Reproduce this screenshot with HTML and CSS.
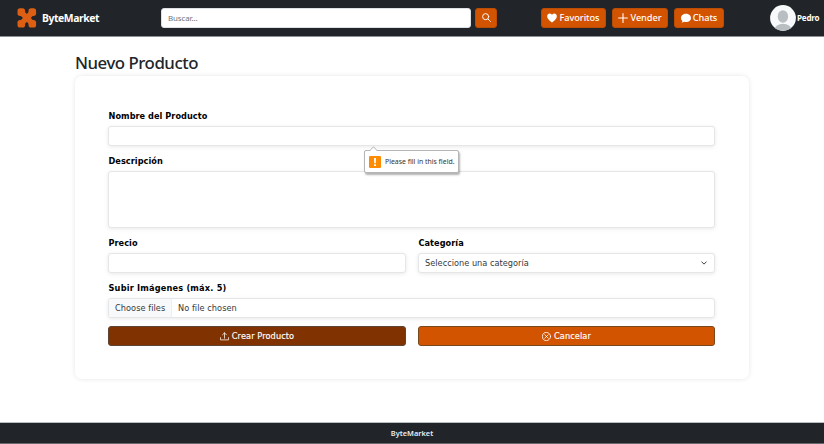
FILE: index.html
```
<!DOCTYPE html>
<html lang="es">
<head>
<meta charset="utf-8">
<title>ByteMarket</title>
<link rel="stylesheet" href="styles.css">
</head>
<body>
<header class="navbar">
  <a class="brand">
    <svg class="logo" viewBox="0 0 20 20" fill="#dd5f13"><rect x="0.500" y="0.300" width="7.600" height="7.600" rx="2.600"/><rect x="11.500" y="0.300" width="7.600" height="7.600" rx="2.600"/><rect x="0.500" y="12" width="7.600" height="7.600" rx="2.600"/><rect x="11.500" y="12" width="7.600" height="7.600" rx="2.600"/><path d="M4.500 4.500L15.200 15.400M15.200 4.500L4.500 15.400" stroke="#dd5f13" stroke-width="5.600"/></svg>
    <span class="brand-name">ByteMarket</span>
  </a>
  <form class="search">
    <div class="search-input"><span>Buscar...</span></div>
    <div class="btn search-btn"><svg viewBox="0 0 16 16" width="9" height="9" fill="none" stroke="#fff" stroke-width="1.700" stroke-linecap="round"><circle cx="6.500" cy="6.500" r="5.400"/><path d="M10.600 10.600L15 15"/></svg></div>
  </form>
  <nav class="links">
    <a class="btn fav"><svg viewBox="0 0 16 16" width="10" height="10" fill="#fff"><path d="M8 15.200C5 13 .3 9.500.3 5.200C.3.500 5.500-.5 8 2.600C10.500-.5 15.700.5 15.700 5.200C15.700 9.500 11 13 8 15.200Z"/></svg><span>Favoritos</span></a>
    <a class="btn sell"><svg viewBox="0 0 16 16" width="10" height="10" stroke="#fff" stroke-width="1.700" stroke-linecap="round"><path d="M8 1V15M1 8H15"/></svg><span>Vender</span></a>
    <a class="btn chat"><svg viewBox="0 0 16 16" width="10" height="10" fill="#fff"><path d="M8 1c4.400 0 8 3 8 6.800s-3.600 6.700-8 6.700c-1 0-2-.2-2.800-.4C4 14.800 2.500 15.300.7 15.500c1-1 1.500-2 1.500-2.900C.8 11.300 0 9.700 0 7.800 0 4 3.600 1 8 1z"/></svg><span>Chats</span></a>
  </nav>
  <div class="user">
    <svg class="avatar" viewBox="0 0 26 26"><defs><clipPath id="face"><circle cx="13" cy="13" r="12.800"/></clipPath></defs><circle cx="13" cy="13" r="12.900" fill="#f8f9fa"/><g clip-path="url(#face)" fill="#b9bec3"><ellipse cx="12.900" cy="11.500" rx="5.200" ry="6.200"/><ellipse cx="13" cy="25" rx="8.500" ry="6.300"/></g></svg>
    <span>Pedro</span>
  </div>
</header>
<main>
  <h1><span>Nuevo Producto</span></h1>
  <section class="card">
    <div class="field name">
      <label>Nombre del Producto</label>
      <div class="control"></div>
      <div class="tip">
        <svg class="arrow" viewBox="0 0 9 5"><path d="M0.500 5L4.500 0.800L8.500 5" fill="#fff" stroke="#aaa" stroke-width="0.900"/></svg>
        <svg class="warn" viewBox="0 0 12 12"><rect width="12" height="12" rx="1" fill="#ff8c00"/><path d="M5 2H7L6.800 7.200H5.200ZM5.100 8.200H6.900V10H5.100Z" fill="#fff"/></svg>
        <span>Please fill in this field.</span>
      </div>
    </div>
    <div class="field">
      <label>Descripción</label>
      <div class="control area"></div>
    </div>
    <div class="cols">
      <div class="field"><label>Precio</label><div class="control"></div></div>
      <div class="field"><label>Categoría</label><div class="control select"><span>Seleccione una categoría</span><svg viewBox="0 0 16 16" width="6" height="6" fill="none" stroke="#343a40" stroke-width="2.600" stroke-linecap="round" stroke-linejoin="round"><path d="M2 5L8 11L14 5"/></svg></div></div>
    </div>
    <div class="field">
      <label class="upload">Subir Imágenes (máx. 5)</label>
      <div class="control file"><span class="choose">Choose files</span><span class="none">No file chosen</span></div>
    </div>
    <div class="cols">
      <div class="btn action create"><svg viewBox="0 0 16 16" width="9" height="9" fill="none" stroke="#f6e9df" stroke-width="1.500" stroke-linecap="round" stroke-linejoin="round"><path d="M.8 10V14H15.200V10M8 11V1.500M4.500 5L8 1.500L11.500 5"/></svg><span>Crear Producto</span></div>
      <div class="btn action cancel"><svg viewBox="0 0 16 16" width="9" height="9" fill="none" stroke="#fff" stroke-width="1.500" stroke-linecap="round"><circle cx="8" cy="8" r="7.200"/><path d="M5 5L11 11M11 5L5 11"/></svg><span>Cancelar</span></div>
    </div>
  </section>
</main>
<footer><span>ByteMarket</span></footer>
</body>
</html>
```
FILE: styles.css
```
* { box-sizing: border-box; }
body { margin: 0; height: 444px; display: flex; flex-direction: column; overflow: hidden; background: #fff; font-family: "Noto Sans", "Open Sans", sans-serif; color: #212529; }
svg { display: block; flex: none; }
span, label { white-space: nowrap; }
.navbar { height: 37px; flex: none; display: flex; align-items: center; padding: 0 0 1px 17px; background: #212529; border-bottom: 1px solid #8c9092; color: #fff; }
.brand { width: 144px; display: flex; align-items: center; gap: 5px; }
.logo { width: 20px; height: 20px; }
.brand-name { font-size: 10.4px; font-weight: 700; letter-spacing: -0.44px; }
.search { display: flex; gap: 4px; width: 336px; }
.search-input { width: 310px; height: 20px; padding-left: 6px; display: flex; align-items: center; background: #fff; border: 1px solid #dee2e6; border-radius: 3px; color: #6c757d; font-size: 7.9px; letter-spacing: -0.1px; }
.btn { height: 20px; display: flex; align-items: center; justify-content: center; background: #d35400; border: 1px solid #bb4c04; border-radius: 3px; color: #fff; font-size: 9px; font-weight: 500; }
.search-btn { width: 22px; }
.links { display: flex; gap: 6px; margin-left: 44px; }
.links .btn { gap: 2px; }
.links .btn span { font-size: 9.2px; letter-spacing: -0.05px; }
.fav { width: 65px; }
.sell { width: 56px; }
.chat { width: 50px; }
.user { display: flex; align-items: center; gap: 1px; margin-left: 46px; font-size: 8px; font-weight: 700; }
.user span { letter-spacing: -0.15px; }
.avatar { width: 26px; height: 26px; }
main { flex: 1; padding: 0 75px; }
h1 { margin: 0; height: 39px; padding-top: 14px; font-size: 16.8px; line-height: 24px; font-weight: 500; letter-spacing: -0.46px; }
.card { width: 674px; height: 303px; padding: 33px 34px 33px 33px; border-radius: 7px; box-shadow: 0 0 5px rgba(0, 0, 0, .1); font-family: "DejaVu Sans", sans-serif; display: flex; flex-direction: column; gap: 8px; }
.field { position: relative; display: flex; flex-direction: column; gap: 4px; }
label { height: 13px; line-height: 14px; padding-left: 0.500px; color: #000; font-size: 8.2px; font-weight: 700; letter-spacing: 0.04px; align-self: flex-start; }
.upload { letter-spacing: 0.2px; }
.control { height: 20px; display: flex; align-items: center; background: #fff; border: 1px solid #e4e6e8; border-radius: 3px; box-shadow: 0 1px 4px rgba(0, 0, 0, .09); font-size: 8.2px; letter-spacing: 0.06px; color: #343a40; }
.area { height: 57px; }
.cols { display: grid; grid-template-columns: 298px 297px; gap: 12px; }
.select { justify-content: space-between; padding: 0 7px 0 6px; letter-spacing: 0.02px; }
.file { overflow: hidden; }
.choose { height: 18px; line-height: 18px; width: 63px; padding-left: 6px; background: #f8f9fa; border-right: 1px solid #eceef0; }
.none { margin-left: 6px; }
.action { gap: 3px; border-color: #79491e; font-size: 8.2px; }
.action span { letter-spacing: 0.1px; -webkit-text-stroke: 0.15px #fff; }
.create { background: #803300; border-color: #5d4534; }
.tip { position: absolute; z-index: 2; left: 256px; top: 41px; width: 95px; height: 23px; padding-left: 4px; display: flex; align-items: center; gap: 4px; background: #fff; border: 1px solid #b5b5b5; border-radius: 2px; box-shadow: 1px 2px 2px rgba(0, 0, 0, .3); color: #333; font-family: "Noto Sans", sans-serif; font-size: 6.9px; }
.warn { width: 12px; height: 12px; }
.arrow { position: absolute; left: 4px; top: -5px; width: 9px; height: 5px; }
footer { height: 22px; flex: none; display: flex; align-items: center; justify-content: center; background: #212529; border-top: 1px solid #b9bfc1; border-bottom: 1px solid #666a6d; color: #e9ecef; font-size: 7.4px; font-weight: 600; }
```
